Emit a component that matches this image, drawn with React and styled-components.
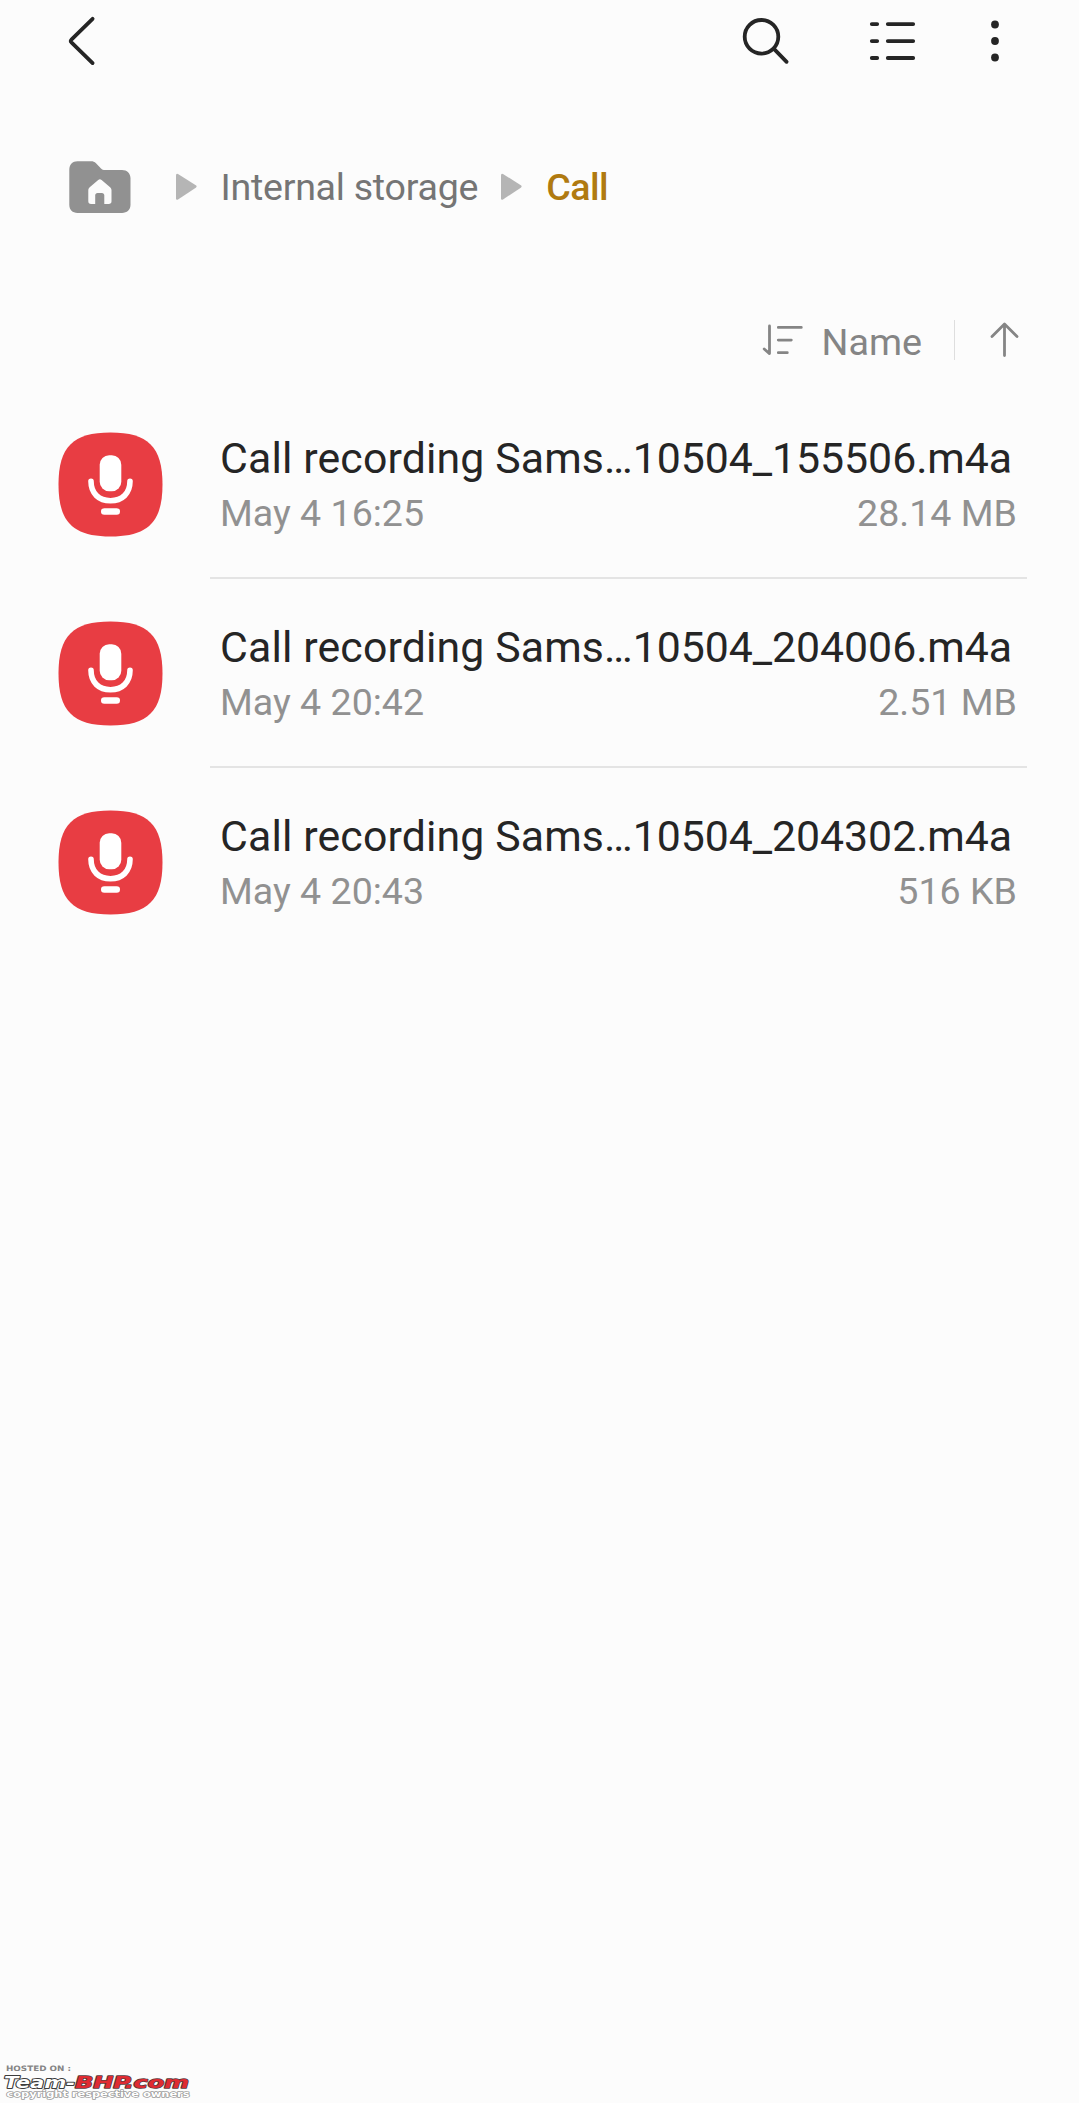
import React from "react";
import styled, { createGlobalStyle } from "styled-components";

const GlobalStyle = createGlobalStyle`
  html, body { margin: 0; padding: 0; background: #fcfcfc; }
  *, *::before, *::after { box-sizing: border-box; }
  svg { display: block; flex: none; }
`;

const Screen = styled.div`
  display: flex;
  flex-direction: column;
  width: 1079px;
  height: 2103px;
  overflow: hidden;
  background: #fcfcfc;
  font-family: Roboto, "Noto Sans", sans-serif;
`;

const TopBar = styled.header`
  display: flex;
  align-items: center;
  height: 81px;
  padding: 0 78.5px 0 64px;
`;

const Actions = styled.div`
  display: flex;
  align-items: center;
  margin-left: auto;
`;

const IconButton = styled.button`
  display: flex;
  align-items: center;
  justify-content: center;
  width: ${(p) => p.$width}px;
  height: 56px;
  margin: 0 ${(p) => p.$after || 0}px 0 0;
  padding: 0;
  border: 0;
  background: none;
  color: #252525;
`;

const Breadcrumb = styled.nav`
  display: flex;
  align-items: center;
  height: 80px;
  margin-top: 66px;
  padding-left: 69px;
`;

const Crumb = styled.span`
  font-size: 37.6px;
  line-height: 50px;
  white-space: nowrap;
  letter-spacing: ${(p) => (p.$current ? -0.5 : -0.26)}px;
  font-weight: ${(p) => (p.$current ? 500 : 400)};
  color: ${(p) => (p.$current ? "#b07a10" : "#757575")};
`;

const Arrow = styled.svg`
  width: 21px;
  height: 28px;
  margin: 0 ${(p) => p.$after}px 0 ${(p) => p.$before}px;
  fill: #b5b5b5;
`;

const SortBar = styled.div`
  display: flex;
  align-items: center;
  justify-content: flex-end;
  height: 60px;
  margin-top: 83px;
  padding-right: 59px;
  color: #858585;
`;

const SortLabel = styled.span`
  margin: 3px 32px 0 18px;
  font-size: 37.7px;
  line-height: 50px;
`;

const SortDivider = styled.span`
  width: 1px;
  height: 40px;
  margin-right: 35px;
  background: #dedede;
`;

const FileList = styled.ul`
  display: flex;
  flex-direction: column;
  margin: 20px 0 0;
  padding: 0 52px 0 58px;
  list-style: none;
`;

const FileRow = styled.li`
  display: flex;
  align-items: stretch;
  gap: 47px;
  height: 189px;
`;

const FileIcon = styled.div`
  display: flex;
  align-items: center;
  width: 105px;
`;

const FileText = styled.div`
  display: flex;
  flex-direction: column;
  flex: 1;
  min-width: 0;
  gap: 3px;
  padding: 41px 10px 0 10px;
  border-bottom: 2px solid ${(p) => (p.$last ? "transparent" : "#e4e4e4")};
`;

const FileName = styled.div`
  font-size: 42.8px;
  line-height: 54px;
  white-space: nowrap;
  color: #252525;
`;

const NamePart = styled.span`
  letter-spacing: ${(p) => p.$spacing}px;
`;

const FileMeta = styled.div`
  display: flex;
  justify-content: space-between;
  font-size: 37.6px;
  line-height: 50px;
  color: #919191;
`;

const Footer = styled.footer`
  margin-top: auto;
`;

const MarkText = styled.text`
  font-family: "DejaVu Sans", sans-serif;
  font-weight: 700;
  font-style: ${(p) => (p.$italic ? "italic" : "normal")};
  font-size: ${(p) => p.$size}px;
  fill: ${(p) => p.$fill};
  stroke: ${(p) => p.$stroke || "none"};
  stroke-width: ${(p) => p.$strokeWidth || 0}px;
  stroke-linejoin: round;
  paint-order: stroke;
`;

const files = [
  { stem: "Call recording Sams…", tail: "10504_155506.m4a", date: "May 4 16:25", size: "28.14 MB" },
  { stem: "Call recording Sams…", tail: "10504_204006.m4a", date: "May 4 20:42", size: "2.51 MB" },
  { stem: "Call recording Sams…", tail: "10504_204302.m4a", date: "May 4 20:43", size: "516 KB" },
];

const BackIcon = () => (
  <svg width="36" height="56" viewBox="64 12.5 36 56" fill="none" stroke="currentColor" strokeWidth="3.8" strokeLinecap="round" strokeLinejoin="round">
    <path d="M92.6 18.3 71.4 39.2Q70.2 40.5 71.4 41.8L92.6 62.6" />
  </svg>
);

const SearchIcon = () => (
  <svg width="48" height="56" viewBox="742 12.5 48 56" fill="none" stroke="currentColor" strokeWidth="3.8" strokeLinecap="round">
    <circle cx="761.5" cy="36.3" r="16.8" />
    <path d="M774.2 48.6 786.6 61.3" />
  </svg>
);

const ListIcon = () => (
  <svg width="48" height="56" viewBox="868 12.5 48 56" fill="none" stroke="currentColor" strokeWidth="3.8" strokeLinecap="round">
    <path d="M871.8 23.6h5.4M887.8 23.6h25.4M871.8 40.6h5.4M887.8 40.6h25.4M871.8 57.5h5.4M887.8 57.5h25.4" />
  </svg>
);

const MoreIcon = () => (
  <svg width="12" height="56" viewBox="988.5 12.5 12 56" fill="currentColor">
    <circle cx="994.5" cy="24" r="3.9" />
    <circle cx="994.5" cy="40.5" r="3.9" />
    <circle cx="994.5" cy="57" r="3.9" />
  </svg>
);

const HomeFolderIcon = () => (
  <svg width="62" height="52" viewBox="0 -0.3 62 52">
    <path fill="#919191" d="M8.5 0H22c2 0 3.500.6 5 2l5 5.200c1.200 1.200 2.200 1.500 4 1.500h17c5 0 8.500 3.300 8.500 8.300V43.500c0 5-3.500 8.200-8.500 8.200H8.500C3.500 51.700.3 48.500.3 43.500V8.500C.3 3.300 3.500 0 8.500 0Z" />
    <path fill="#fcfcfc" d="M29.200 18.600 20.700 26c-1 .9-1.400 1.800-1.400 3v11c0 1.800 1 2.800 2.800 2.800h4.100V34c0-1.500.9-2.400 2.400-2.400h4.300c1.500 0 2.400.9 2.400 2.400v8.800h4.400c1.800 0 2.800-1 2.800-2.800V29c0-1.200-.4-2.100-1.400-3l-8.500-7.400c-1.200-1-2.200-1-3.400 0Z" />
  </svg>
);

const CrumbArrow = ({ before, after }) => (
  <Arrow viewBox="0 0 21 28" $before={before} $after={after}>
    <path d="M0 2.200Q0 0 2 .900L19.800 12.300Q21.500 13.500 19.800 14.700L2 26.500Q0 27.500 0 25.300Z" />
  </Arrow>
);

const SortIcon = () => (
  <svg width="42" height="34" viewBox="761 322.6 42 34" fill="none" stroke="currentColor" strokeWidth="2.8" strokeLinecap="round" strokeLinejoin="round">
    <path d="M768.500 325.500V353.200L763.200 348.600M777.300 327h23M777.300 339.700h13M777.300 352.300h9" />
  </svg>
);

const AscendingIcon = () => (
  <svg width="30" height="36" viewBox="990 321.5 30 36" fill="none" stroke="currentColor" strokeWidth="2.8" strokeLinecap="round" strokeLinejoin="round">
    <path d="M1004.500 355V323.800M992 336 1004.500 323.600 1017 336" />
  </svg>
);

const RecorderIcon = () => (
  <svg width="105" height="105" viewBox="0 0 105 105">
    <path fill="#e83d43" d="M52.500.5C90 .5 104.500 15 104.500 52.500S90 104.500 52.500 104.500.5 90 .5 52.500 15 .5 52.500.5Z" />
    <rect x="41.700" y="23.200" width="21.600" height="36" rx="9.500" fill="#fff" />
    <path d="M33 49.300C33 61.500 41 68.800 52.500 68.800S72 61.500 72 49.300" fill="none" stroke="#fff" strokeWidth="5.6" strokeLinecap="round" />
    <rect x="43" y="76.200" width="19" height="6.600" rx="3.300" fill="#fff" />
  </svg>
);

const Watermark = () => (
  <svg width="200" height="48" viewBox="0 0 200 48">
    <MarkText x="6" y="16.200" $size={7.4} $fill="#858585" textLength="65" lengthAdjust="spacingAndGlyphs">HOSTED ON :</MarkText>
    <MarkText x="6.500" y="42" $size={9} $fill="#fff" $stroke="#9a9a9a" $strokeWidth={1.4} textLength="183" lengthAdjust="spacingAndGlyphs">copyright respective owners</MarkText>
    <MarkText x="4" y="32.700" $italic $size={16} $fill="#fff" $stroke="#3c3c3c" $strokeWidth={1.8} textLength="71" lengthAdjust="spacingAndGlyphs">Team-</MarkText>
    <MarkText x="75" y="32.700" $italic $size={16} $fill="#e02b32" $stroke="#5a3a3c" $strokeWidth={1.5} textLength="114" lengthAdjust="spacingAndGlyphs">BHP.com</MarkText>
  </svg>
);

export default function App() {
  return (
    <Screen>
      <GlobalStyle />
      <TopBar>
        <IconButton $width={36} aria-label="Back"><BackIcon /></IconButton>
        <Actions>
          <IconButton $width={48} $after={78} aria-label="Search"><SearchIcon /></IconButton>
          <IconButton $width={48} $after={72.5} aria-label="View"><ListIcon /></IconButton>
          <IconButton $width={12} aria-label="More options"><MoreIcon /></IconButton>
        </Actions>
      </TopBar>
      <Breadcrumb>
        <HomeFolderIcon />
        <CrumbArrow before={44.5} after={24} />
        <Crumb>Internal storage</Crumb>
        <CrumbArrow before={23} after={24} />
        <Crumb $current>Call</Crumb>
      </Breadcrumb>
      <SortBar>
        <SortIcon />
        <SortLabel>Name</SortLabel>
        <SortDivider />
        <AscendingIcon />
      </SortBar>
      <FileList>
        {files.map((file, i) => (
          <FileRow key={file.tail}>
            <FileIcon><RecorderIcon /></FileIcon>
            <FileText $last={i === files.length - 1}>
              <FileName>
                <NamePart $spacing={0.14}>{file.stem}</NamePart>
                <NamePart $spacing={-0.05}>{file.tail}</NamePart>
              </FileName>
              <FileMeta>
                <span>{file.date}</span>
                <span>{file.size}</span>
              </FileMeta>
            </FileText>
          </FileRow>
        ))}
      </FileList>
      <Footer><Watermark /></Footer>
    </Screen>
  );
}
